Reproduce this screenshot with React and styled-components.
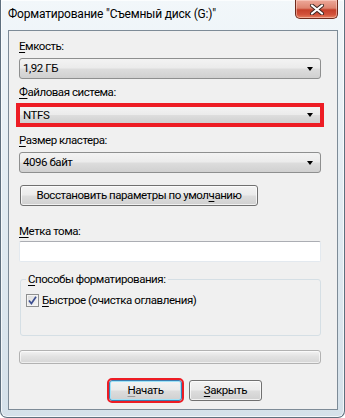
import React from 'react';
import styled, { createGlobalStyle, css } from 'styled-components';

const GlobalStyle = createGlobalStyle`
    html, body {
        margin: 0;
        padding: 0;
        background: #ffffff;
    }
    body {
        font-family: Roboto, "Noto Sans", "Liberation Sans", sans-serif;
        font-size: 11.5px;
        letter-spacing: -0.45px;
        line-height: 15px;
        color: #000;
    }
`;

export default function App() {
    return (
        <>
            <GlobalStyle />
            <Window>
                <TitleBar>
                    <Title>Форматирование "Съемный диск (G:)"</Title>
                    <CloseButton>
                        <svg width="16" height="11" viewBox="0 0 16 11">
                            <path d="M3 1.5 L13 9.5 M13 1.5 L3 9.5" stroke="#3b2520" strokeWidth="4" strokeLinecap="round" />
                            <path d="M3 1.5 L13 9.5 M13 1.5 L3 9.5" stroke="#ffffff" strokeWidth="2.2" strokeLinecap="round" />
                        </svg>
                    </CloseButton>
                </TitleBar>
                <Client>
                    <Label $top={8}><Key>Е</Key>мкость:</Label>
                    <Combo>1,92 ГБ<Arrow /></Combo>

                    <Label $top={6}><Key>Ф</Key>айловая система:</Label>
                    <Combo $marked>NTFS<Arrow /></Combo>

                    <Label $top={8}><Key>Р</Key>азмер кластера:</Label>
                    <Combo>4096 байт<Arrow /></Combo>

                    <Button $wide>Восстановить параметры по умол<Key>ч</Key>анию</Button>

                    <Label $top={18}><Key>М</Key>етка тома:</Label>
                    <TextInput />

                    <Group>
                        <Legend><Key>С</Key>пособы форматирования:</Legend>
                        <CheckRow>
                            <CheckBox>
                                <svg width="9" height="9" viewBox="0 0 9 9">
                                    <path d="M1 4.5 L3.4 7.5 L8 0.8" stroke="#3d4f91" strokeWidth="1.7" fill="none" />
                                </svg>
                            </CheckBox>
                            <span><Key>Б</Key>ыстрое (очистка оглавления)</span>
                        </CheckRow>
                    </Group>

                    <Progress />

                    <ButtonRow>
                        <Button $default $marked><Key $faint>Н</Key>ачать</Button>
                        <Button><Key>З</Key>акрыть</Button>
                    </ButtonRow>
                </Client>
            </Window>
        </>
    );
}

const Window = styled.div`
    width: 345px;
    height: 418px;
    box-sizing: border-box;
    border: 1px solid #5e6f7e;
    border-top: none;
    border-radius: 0 0 7px 7px;
    background: linear-gradient(180deg, #f2f7fa 0%, #e4edf3 40%, #d5e1ea 100%);
    box-shadow: inset 0 0 0 1px rgba(255, 255, 255, 0.7);
    display: flex;
    flex-direction: column;
`;

const TitleBar = styled.div`
    height: 30px;
    display: flex;
    align-items: flex-start;
    justify-content: space-between;
    padding-left: 7px;
    padding-right: 6px;
`;

const Title = styled.div`
    font-size: 12px;
    letter-spacing: -0.2px;
    line-height: 15px;
    margin-top: 7px;
    color: #000;
    white-space: nowrap;
`;

const CloseButton = styled.div`
    width: 43px;
    height: 19px;
    box-sizing: border-box;
    border: 1px solid #6e2a1c;
    border-top: none;
    border-radius: 0 0 5px 5px;
    background: linear-gradient(180deg, #eda99a 0%, #de8470 45%, #c6402a 55%, #d2513a 80%, #e5805f 100%);
    box-shadow: inset 0 0 0 1px rgba(255, 220, 210, 0.5);
    display: flex;
    align-items: center;
    justify-content: center;
`;

const Client = styled.div`
    margin: 0 6px 0 7px;
    height: 380px;
    box-sizing: border-box;
    border: 1px solid #7d8b97;
    background: #f0f0f0;
    padding: 0 15px 0 10px;
    display: flex;
    flex-direction: column;
    align-items: flex-start;
`;

const Label = styled.div`
    height: 15px;
    line-height: 15px;
    margin-top: ${p => p.$top}px;
    margin-bottom: 4px;
    white-space: nowrap;
`;

const Key = styled.u`
    text-decoration-color: ${p => (p.$faint ? '#9a9a9a' : 'inherit')};
    text-underline-offset: 2px;
`;

const winGradient = css`
    background: linear-gradient(180deg, #f3f3f3 0%, #ebebeb 48%, #dddddd 52%, #d0d0d0 100%);
`;

const Combo = styled.div`
    position: relative;
    width: 302px;
    height: ${p => (p.$marked ? '18px' : '21px')};
    box-sizing: border-box;
    border: 1px solid ${p => (p.$marked ? '#ed1c24' : '#8e8f8f')};
    border-radius: 3px;
    ${winGradient}
    padding-left: 3px;
    display: flex;
    align-items: center;
    ${p => p.$marked && css`
        outline: 3px solid #ed1c24;
        outline-offset: 0;
        border-radius: 0;
        margin-top: 2px;
        margin-bottom: 1px;
    `}
`;

const Arrow = styled.span`
    position: absolute;
    right: 7px;
    top: 50%;
    margin-top: -2px;
    width: 0;
    height: 0;
    border-left: 3.5px solid transparent;
    border-right: 3.5px solid transparent;
    border-top: 4px solid #000;
`;

const Button = styled.div`
    width: ${p => (p.$wide ? '238px' : '73px')};
    height: 21px;
    box-sizing: border-box;
    margin-top: ${p => (p.$wide ? '12px' : '0')};
    margin-left: ${p => (p.$wide ? '1px' : '0')};
    border: 1px solid #707070;
    border-radius: 3px;
    ${winGradient}
    box-shadow: inset 0 0 0 1px rgba(255, 255, 255, 0.7);
    display: flex;
    align-items: center;
    justify-content: center;
    white-space: nowrap;
    ${p => p.$default && css`
        border-color: #3c7fb1;
        box-shadow: inset 0 0 0 1px #9fe2f8;
    `}
    ${p => p.$marked && css`
        outline: 2px solid #ed1c24;
        outline-offset: 0;
    `}
`;

const TextInput = styled.div`
    width: 302px;
    height: 21px;
    box-sizing: border-box;
    margin-top: -2px;
    background: #fff;
    border: 1px solid #e3e9ef;
    border-top-color: #abadb3;
    border-radius: 2px;
`;

const Group = styled.div`
    margin-top: 17px;
    margin-left: 1px;
    width: 301px;
    height: 57px;
    box-sizing: border-box;
    border: 1px solid #d5dfe5;
    border-radius: 3px;
    padding: 0 0 0 5px;
    display: flex;
    flex-direction: column;
    align-items: flex-start;
`;

const Legend = styled.div`
    height: 15px;
    margin-top: -8px;
    padding: 0 2px;
    background: #f0f0f0;
`;

const CheckRow = styled.div`
    display: flex;
    align-items: center;
    gap: 3px;
    margin-top: 6px;
    height: 15px;
`;

const CheckBox = styled.div`
    width: 13px;
    height: 13px;
    box-sizing: border-box;
    border: 1px solid #8e8f8f;
    background: linear-gradient(135deg, #dcdcdc 0%, #f6f6f6 100%);
    box-shadow: inset 0 0 0 1px #f4f4f4;
    display: flex;
    align-items: center;
    justify-content: center;
`;

const Progress = styled.div`
    margin-top: 14px;
    width: 302px;
    height: 14px;
    box-sizing: border-box;
    border: 1px solid #b2b2b2;
    border-radius: 3px;
    background: linear-gradient(180deg, #f3f3f3 0%, #e2e2e2 45%, #d6d6d6 100%);
    box-shadow: inset 0 0 0 1px rgba(255, 255, 255, 0.6);
`;

const ButtonRow = styled.div`
    margin-top: 16px;
    padding-left: 90px;
    display: flex;
    gap: 7px;
`;
